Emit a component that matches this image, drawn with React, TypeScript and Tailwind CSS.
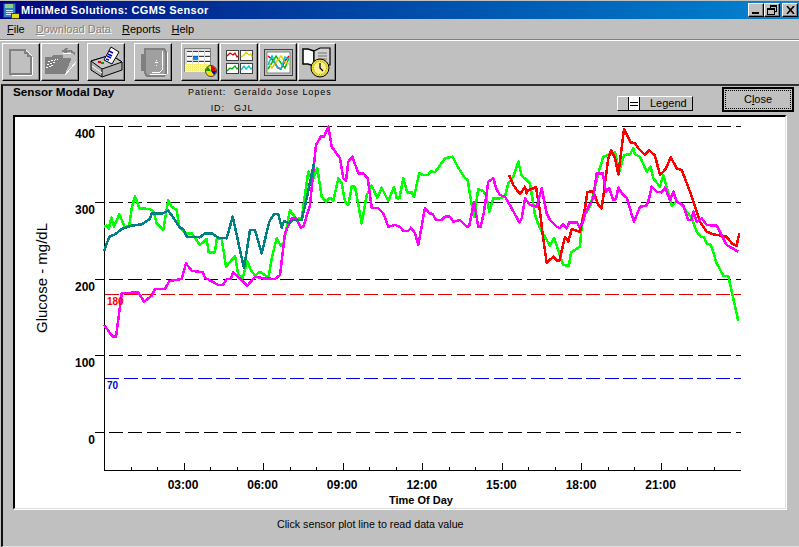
const ui = "font-['Liberation_Sans',Arial,sans-serif]";

// traced from the plot, each run is [originX, originY, points at 3x]
type Run = [number, number, number[][]];

const green: Run[] = [
  [90, 115, [[42,335],[50,332],[56,342],[64,308],[72,335],[88,298],[105,338],[118,330],[125,280],[135,243],[148,280],[178,282],[190,288],[200,325],[220,345],[235,255],[245,275],[260,285],[268,335],[285,355],[305,355],[330,390],[350,372],[356,412],[375,412],[380,372],[395,372],[408,455],[435,423],[445,480],[458,488],[472,438],[482,465],[495,482],[510,470],[525,480],[535,490],[545,430],[560,370],[572,392],[582,380],[600,285],[610,300],[620,312],[635,310]]],
  [300, 115, [[12,260],[25,170],[38,195],[52,160],[65,245],[78,260],[90,248],[100,258],[115,190],[125,205],[135,260],[145,270],[155,215],[165,215],[185,325],[200,240],[215,212],[232,248],[245,218],[265,258],[282,215],[290,250],[298,250],[310,190],[322,232],[335,232],[342,245],[358,175],[370,180],[385,180],[392,168],[405,172],[435,130],[458,125],[470,150],[495,190],[503,195],[515,270],[522,305],[535,222],[550,228],[558,240],[568,290],[580,250],[600,250]]],
  [500, 115, [[15,245],[25,205],[40,185],[55,140],[65,182],[90,205],[105,300],[120,340],[150,392],[162,368],[190,450],[207,452],[213,412],[240,395],[247,310],[270,275],[298,165],[310,125],[345,112],[358,170],[372,120],[390,118],[400,100],[405,118],[420,125],[440,170],[452,155],[460,190],[480,215],[490,180],[515,272],[530,260],[545,270],[575,310],[590,350],[602,365],[612,367],[620,385],[633,390],[650,445],[670,482],[685,484],[715,618]]],
];

const red: Run[] = [
  [500, 115, [[27,180],[40,210],[60,238],[75,215],[80,235],[85,225],[100,220],[108,215],[120,290],[128,360],[140,443],[160,425],[172,438],[178,438],[195,365],[205,380],[215,342],[240,350],[255,280],[262,232],[275,228],[285,240],[295,270],[305,280],[325,130],[333,105],[345,130],[355,178],[372,42],[392,82],[405,85],[415,100],[435,120],[447,105],[465,122],[480,180],[497,162],[512,127],[530,160],[545,165],[570,230],[600,320],[620,350],[640,358],[680,365],[695,385],[710,392],[718,355]]],
];

const magenta: Run[] = [
  [90, 115, [[42,630],[68,665],[78,665],[88,590],[95,535],[145,532],[162,560],[185,542],[195,522],[225,522],[238,498],[275,492],[288,445],[305,467],[338,472],[345,488],[385,510],[398,510],[410,492],[422,492],[430,472],[472,512],[495,485],[520,490],[555,492],[570,480],[585,355],[605,310],[618,308],[632,338],[640,335],[660,270]]],
  [300, 115, [[48,90],[62,65],[72,65],[85,35],[95,95],[120,130],[130,190],[138,198],[145,140],[157,125],[175,175],[190,175],[203,190],[215,278],[235,280],[250,295],[265,335],[285,330],[300,335],[310,348],[325,348],[333,338],[345,355],[355,390],[375,278],[388,295],[398,297],[408,315],[425,315],[435,305],[450,305],[460,320],[480,315],[500,335],[508,333],[522,260],[535,335],[542,335],[552,290],[565,200],[580,190],[590,225],[600,240]]],
  [500, 115, [[0,240],[15,245],[35,280],[58,322],[65,310],[75,250],[90,270],[110,275],[125,220],[140,295],[150,315],[170,335],[180,340],[188,328],[200,340],[208,322],[230,322],[238,335],[248,325],[255,295],[280,250],[290,175],[308,175],[318,230],[328,220],[340,255],[348,253],[355,218],[370,240],[380,248],[402,320],[420,275],[438,272],[445,260],[455,215],[470,230],[485,232],[495,218],[510,255],[520,230],[530,260],[550,270],[565,315],[575,315],[580,290],[590,320],[605,310],[620,330],[650,332],[680,390],[715,410]]],
];

const teal: Run[] = [
  [90, 115, [[42,408],[58,365],[75,358],[95,342],[125,332],[155,328],[180,312],[185,295],[218,295],[235,287],[255,315],[270,338],[280,342],[290,365],[330,367],[345,355],[365,355],[385,368],[410,370],[428,305],[462,460],[480,345],[495,345],[515,415],[538,320],[552,297],[565,297],[575,338],[582,318],[598,325],[610,315],[635,315],[650,250],[672,145]]],
];

function toPoints(runs: Run[]) {
  return runs
    .flatMap(([ox, oy, pts]) => pts.map(([x, y]) => `${(ox + x / 3).toFixed(1)},${(oy + y / 3).toFixed(1)}`))
    .join(' ');
}

// panel starts at 15,117 in page coordinates
function Chart() {
  const grid = [126, 202, 279, 355, 432];
  const yLabels = [[400, 133], [300, 209], [200, 286], [100, 362], [0, 439]] as const;
  const hours = Array.from({ length: 24 }, (_, i) => i);
  const xLabels = ['03:00', '06:00', '09:00', '12:00', '15:00', '18:00', '21:00'];
  return (
    <svg width="770" height="391" viewBox="15 117 770 391" className="block">
      {grid.map((y) => (
        <line key={y} x1="95" x2="741" y1={y + 0.5} y2={y + 0.5} stroke="#000" strokeDasharray="14 5" strokeDashoffset="5" shapeRendering="crispEdges" />
      ))}
      <line x1="105" x2="741" y1="294.5" y2="294.5" stroke="#e00000" strokeDasharray="14 4.5" shapeRendering="crispEdges" />
      <line x1="105" x2="741" y1="378.5" y2="378.5" stroke="#0000e0" strokeDasharray="14 4.5" shapeRendering="crispEdges" />
      <line x1="104.5" x2="104.5" y1="126" y2="471" stroke="#000" shapeRendering="crispEdges" />
      <line x1="104" x2="741" y1="470.5" y2="470.5" stroke="#000" shapeRendering="crispEdges" />
      {hours.map((h) => (
        <line key={h} x1={104.5 + h * 26.5} x2={104.5 + h * 26.5} y1={h % 3 === 0 ? 463 : 467} y2="470" stroke="#000" shapeRendering="crispEdges" />
      ))}
      {[
        [green, '#00ff00'],
        [red, '#ff0000'],
        [magenta, '#ff00ff'],
        [teal, '#008080'],
      ].map(([runs, color]) => (
        <polyline key={color as string} points={toPoints(runs as Run[])} fill="none" stroke={color as string} strokeWidth="2.5" strokeLinejoin="round" shapeRendering="crispEdges" />
      ))}
      {yLabels.map(([v, y]) => (
        <text key={v} x="95" y={y + 5} textAnchor="end" fontSize="12" fontWeight="700" fill="#000" fontFamily="Liberation Sans">{v}</text>
      ))}
      {xLabels.map((t, i) => (
        <text key={t} x={183 + i * 79.6} y="489" textAnchor="middle" fontSize="12" fontWeight="700" fill="#000" fontFamily="Liberation Sans" >{t}</text>
      ))}
      <text x="421" y="504" textAnchor="middle" fontSize="11" fontWeight="700" fill="#000" fontFamily="Liberation Sans">Time Of Day</text>
      <text x="107" y="305" fontSize="10" fontWeight="700" fill="#f00000" fontFamily="Liberation Sans">180</text>
      <text x="107" y="389" fontSize="10" fontWeight="700" fill="#0000e0" fontFamily="Liberation Sans">70</text>
      <text x="0" y="0" transform="translate(47 278) rotate(-90)" textAnchor="middle" fontSize="15" fill="#000" fontFamily="Liberation Sans">Glucose - mg/dL</text>
    </svg>
  );
}

function ToolButton({ children, className = '' }: { children: React.ReactNode; className?: string }) {
  return (
    <div className={`w-[38px] h-[38px] flex items-center justify-center border border-t-white border-l-white border-r-[#000] border-b-[#000] bg-[#c0c0c0] shadow-[inset_-1px_-1px_0_#808080] ${className}`}>
      {children}
    </div>
  );
}

function NewIcon() {
  return (
    <svg width="24" height="27" viewBox="0 0 24 27" shapeRendering="crispEdges">
      <path d="M1 1h15v3h3v3h3v18H1z" fill="#c0c0c0" stroke="#808080" strokeWidth="2" />
      <path d="M3 26h20M23 8v18M17 1l6 6" stroke="#fff" fill="none" />
    </svg>
  );
}

function OpenIcon() {
  return (
    <svg width="34" height="28" viewBox="0 0 34 28" shapeRendering="crispEdges">
      <path d="M2 9h6l2-2h10v3h8v2L22 26H2z" fill="#808080" />
      <path d="M5 14l10-3M4 17l9-3M3 20l7-3" stroke="#fff" strokeDasharray="2 1" fill="none" />
      <path d="M19 3h9l4 3M24 0l-3 3 3 3" stroke="#808080" strokeWidth="2" fill="none" />
      <path d="M22 27l11-13M20 5h8" stroke="#fff" fill="none" />
    </svg>
  );
}

function PrintIcon() {
  return (
    <svg width="34" height="32" viewBox="0 0 34 32">
      <path d="M2 15l20-6 11 7v8L13 31 2 24z" fill="#b0b0b0" stroke="#000" />
      <path d="M2 15l20-6 11 7-20 7z" fill="#c8c8c8" stroke="#000" />
      <path d="M13 23v8" fill="none" stroke="#000" />
      <path d="M3 20l10 7" fill="none" stroke="#fff" />
      <path d="M15 14L22 1l8 5-7 12z" fill="#fff" stroke="#000" />
      <path d="M20 5l4 2M19 8l4 2M18 10l4 2M17 13l3 1" stroke="#0000e0" strokeWidth="1.4" />
      <rect x="9" y="15" width="3" height="2" fill="#e00000" />
      <rect x="12" y="16" width="3" height="2" fill="#00a000" />
    </svg>
  );
}

function PumpIcon() {
  return (
    <svg width="30" height="32" viewBox="0 0 30 32" shapeRendering="crispEdges">
      <path d="M7 3h19l2 3v21l-2 3H9l-2-3z" fill="#a0a0a0" stroke="#808080" strokeWidth="2" />
      <path d="M3 8h4v17H3z" fill="#808080" />
      <path d="M29 6v22M12 28h16M24 5v19l-2 2h-8" stroke="#fff" fill="none" />
      <path d="M17 16h3M18 14h1M18 19h1" stroke="#fff" />
    </svg>
  );
}

function CalendarIcon() {
  const cells = Array.from({ length: 12 }, (_, i) => i);
  return (
    <svg width="33" height="29" viewBox="0 0 33 29" shapeRendering="crispEdges">
      <rect x="0.5" y="0.5" width="26" height="23" fill="#d8d8d8" stroke="#808080" />
      {cells.map((i) => (
        <g key={i}>
          <rect x={3 + (i % 4) * 6} y={3 + Math.floor(i / 4) * 5} width="5" height="4" fill={i === 5 ? '#0090e8' : '#fff'} />
          <rect x={3 + (i % 4) * 6} y={3 + Math.floor(i / 4) * 5} width="5" height="1" fill={i === 5 ? '#0060c0' : '#404040'} />
        </g>
      ))}
      <rect x="1" y="16" width="25" height="8" fill="#f8f070" />
      <path d="M1 17h25M1 19h25M1 21h25M1 23h25" stroke="#fff" strokeDasharray="1 1" />
      <g shapeRendering="auto">
        <circle cx="27" cy="23" r="5.5" fill="#f8e000" stroke="#404040" />
        <path d="M27 23V18a5 5 0 0 1 5 5z" fill="#e00000" />
        <path d="M27 23h5a5 5 0 0 1-2 4z" fill="#0000c0" />
        <path d="M27 23h-5a5 5 0 0 1 2-4z" fill="#00a000" />
      </g>
    </svg>
  );
}

function MiniChartsIcon() {
  const cells = [
    ['#e00000', 0, 0, 'M1 6l3-3 3 2 2-2 2 4 1-1'],
    ['#e0d000', 14, 0, 'M1 7l3-2 2-3 3 3 2-1 1 3'],
    ['#00b000', 0, 13, 'M1 8l3-3 2 1 3-3 2 3 1-1'],
    ['#00c0c0', 14, 13, 'M1 7l3-4 2 3 3-3 2 3 1-1'],
  ] as const;
  return (
    <svg width="27" height="24" viewBox="0 0 27 24">
      {cells.map(([c, x, y, d]) => (
        <g key={c} transform={`translate(${x} ${y})`}>
          <rect x="0.5" y="0.5" width="12" height="10" fill="#fff" stroke="#404040" />
          <path d={d} fill="none" stroke={c} strokeWidth="1.3" />
        </g>
      ))}
    </svg>
  );
}

function BigChartIcon() {
  return (
    <svg width="29" height="27" viewBox="0 0 29 27">
      <rect x="0.5" y="0.5" width="28" height="26" fill="#c0c0c0" stroke="#404040" />
      <rect x="3" y="3" width="23" height="21" fill="#fff" stroke="#808080" />
      <path d="M4 7l5 4 5 8 3 1 4-8 4-5" fill="none" stroke="#e00000" strokeWidth="1.5" />
      <path d="M4 20l5-8 3-5 5 7 4 5 4-10" fill="none" stroke="#00c000" strokeWidth="1.5" />
      <path d="M4 13l4 6 5-7 4-5 4 6 4 2" fill="none" stroke="#e0d000" strokeWidth="1.5" />
      <path d="M4 16l4-9 5 11 4 2 4-12 4 2" fill="none" stroke="#00c0e0" strokeWidth="1.5" />
    </svg>
  );
}

function BookClockIcon() {
  return (
    <svg width="30" height="31" viewBox="0 0 30 31">
      <path d="M1 2h5l6 2v15l-6-2H1z" fill="#fff" stroke="#000" strokeWidth="1.5" />
      <path d="M12 4l6-3h10v17h-10l-6 1z" fill="#d0d0d0" stroke="#000" strokeWidth="1.2" />
      <path d="M16 6h9M16 9h9M16 12h9" stroke="#707070" />
      <circle cx="18" cy="21" r="9" fill="#e8d830" stroke="#000" />
      <circle cx="18" cy="21" r="6.5" fill="#f8f090" stroke="#a09000" strokeDasharray="1 1.5" />
      <path d="M18 16v5l3 3" fill="none" stroke="#000" strokeWidth="1.2" />
    </svg>
  );
}

function AppIcon() {
  return (
    <svg width="17" height="17" viewBox="0 0 17 17" shapeRendering="crispEdges">
      <rect x="1" y="1" width="12" height="14" fill="#3080c8" stroke="#004080" />
      <rect x="3" y="2" width="8" height="4" fill="#90d080" />
      <path d="M4 8h7M4 10h7M4 12h7" stroke="#d0e8ff" />
      <rect x="9" y="11" width="8" height="5" fill="#e8d820" stroke="#404000" />
    </svg>
  );
}

function WinButton({ children, className = '' }: { children: React.ReactNode; className?: string }) {
  return (
    <div className={`w-[16px] h-[14px] flex items-center justify-center bg-[#c0c0c0] border border-t-white border-l-white border-r-black border-b-black shadow-[inset_-1px_-1px_0_#808080] ${className}`}>
      {children}
    </div>
  );
}

function MenuItem({ first, rest, disabled }: { first: string; rest: string; disabled?: boolean }) {
  return (
    <span className={disabled ? 'text-[#808080] [text-shadow:1px_1px_0_#fff]' : 'text-black'}>
      <span className="underline">{first}</span>
      {rest}
    </span>
  );
}

export default function App() {
  return (
    <div className={`${ui} w-[799px] h-[547px] overflow-hidden bg-[#c0c0c0] flex flex-col text-black`}>
      {/* Title bar */}
      <div className="mt-px h-[18px] flex items-center justify-between pl-[2px] pr-px bg-gradient-to-r from-[#000080] to-[#1084d0] shrink-0">
        <div className="flex items-center gap-[2px]">
          <AppIcon />
          <span className="text-white font-bold text-[11px] tracking-[0.35px]">MiniMed Solutions: CGMS Sensor</span>
        </div>
        <div className="flex items-center">
          <WinButton>
            <span className="block w-[7px] h-[2px] bg-black mt-[6px] -ml-px" />
          </WinButton>
          <WinButton className="mr-[2px]">
            <svg width="10" height="10" viewBox="0 0 10 10" shapeRendering="crispEdges">
              <path d="M3 .5h6.5v6h-2M3 0v3M.5 3.5h6.5v6H.5z" fill="none" stroke="#000" />
              <path d="M3 1.5h6.5M.5 4.5h6.5" stroke="#000" />
            </svg>
          </WinButton>
          <WinButton>
            <svg width="9" height="8" viewBox="0 0 9 8">
              <path d="M1 0l7 8M8 0L1 8" stroke="#000" strokeWidth="1.6" />
            </svg>
          </WinButton>
        </div>
      </div>

      {/* Menu */}
      <div className="h-[20px] flex items-center pl-[7px] gap-[11px] text-[11px] shrink-0">
        <MenuItem first="F" rest="ile" />
        <MenuItem first="D" rest="ownload Data" disabled />
        <MenuItem first="R" rest="eports" />
        <MenuItem first="H" rest="elp" />
      </div>
      <div className="h-[2px] border-t border-t-[#808080] border-b border-b-white shrink-0" />

      {/* Toolbar */}
      <div className="h-[43px] flex items-start pt-[2px] pl-[2px] shrink-0">
        <ToolButton><NewIcon /></ToolButton>
        <ToolButton className="ml-px"><OpenIcon /></ToolButton>
        <ToolButton className="ml-[8px]"><PrintIcon /></ToolButton>
        <ToolButton className="ml-[9px]"><PumpIcon /></ToolButton>
        <ToolButton className="ml-[9px]"><CalendarIcon /></ToolButton>
        <ToolButton className="ml-px"><MiniChartsIcon /></ToolButton>
        <ToolButton className="ml-px"><BigChartIcon /></ToolButton>
        <ToolButton className="ml-px"><BookClockIcon /></ToolButton>
      </div>

      {/* Report window */}
      <div className="flex-1 ml-px border-t-2 border-l-2 border-b border-t-[#303030] border-l-[#101010] border-b-[#e0e0e0] pl-px flex flex-col">
        <div className="h-[29px] flex items-start shrink-0">
          <div className="ml-[9px] -mt-px w-[163px] text-[11.7px] font-bold leading-[14px]">Sensor Modal Day</div>
          <div className="ml-[20px] mt-[1px] text-[9px] tracking-[0.95px] grid grid-cols-[38px_auto] gap-y-[6px] leading-[10px]">
            <span className="text-right pr-[9px] -ml-2 w-[46px]">Patient:</span>
            <span>Geraldo Jose Lopes</span>
            <span className="text-right pr-[9px] -ml-2 w-[46px]">ID:</span>
            <span>GJL</span>
          </div>
          <div className="ml-auto mt-[10px] mr-[29px] w-[76px] h-[15px] flex items-center bg-[#c0c0c0] border border-t-white border-l-white border-r-black border-b-black text-[11px]">
            <span className="ml-[10px] w-[12px] h-[13px] border-l border-r border-black bg-white flex flex-col justify-center gap-[2px] px-[1px]">
              <span className="block h-px bg-black" />
              <span className="block h-px bg-black" />
            </span>
            <span className="ml-[10px]">Legend</span>
          </div>
          <div className="mt-[1px] mr-[5px] w-[72px] h-[25px] border-2 border-black p-px bg-[#c0c0c0]">
            <div className="w-full h-full border border-dotted border-black flex items-center justify-center text-[11px]">
              <span>C<span className="underline">l</span>ose</span>
            </div>
          </div>
        </div>
        <div className="ml-[9px] w-[773px] h-[394px] border-t-2 border-l-2 border-t-black border-l-black border-r border-b border-r-[#dfdfdf] border-b-[#dfdfdf] shadow-[1px_1px_0_#fff] bg-white">
          <Chart />
        </div>
        <div className="mt-[9px] ml-[273px] text-[10.7px] leading-[13px]">Click sensor plot line to read data value</div>
      </div>
    </div>
  );
}
